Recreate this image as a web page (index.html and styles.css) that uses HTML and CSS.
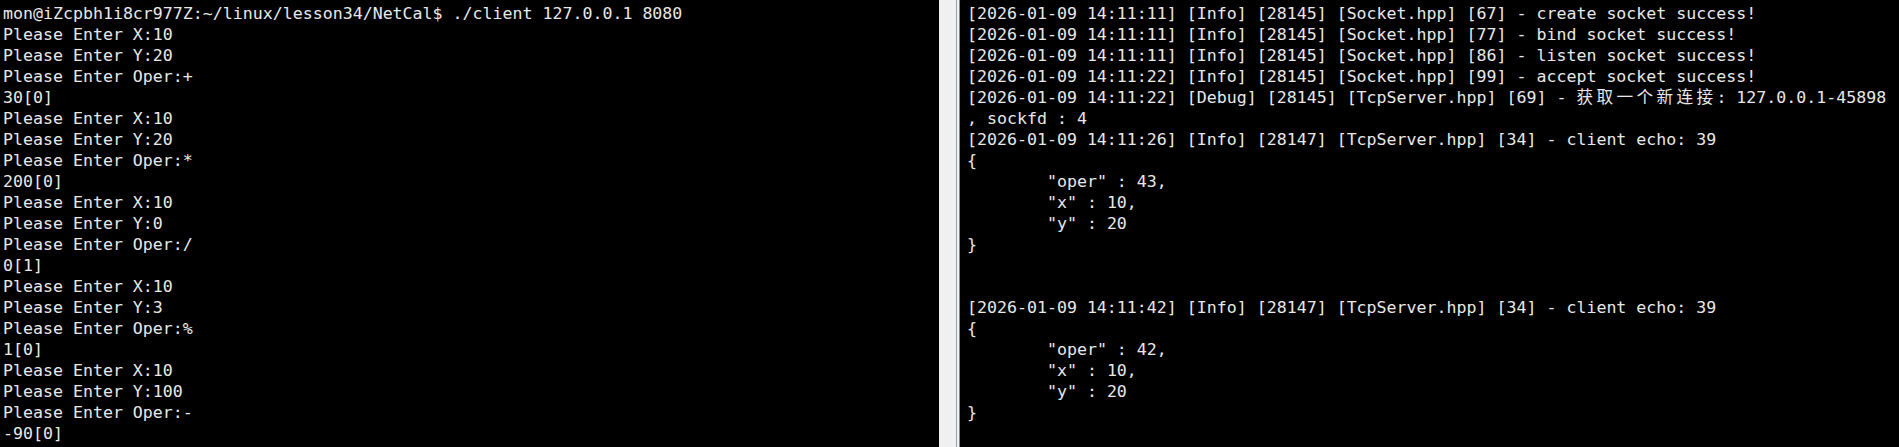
FILE: index.html
```html
<!DOCTYPE html>
<html>
<head>
<meta charset="utf-8">
<link rel="stylesheet" href="styles.css">
</head>
<body>
<div class="screen">
<pre class="pane left">mon@iZcpbh1i8cr977Z:~/linux/lesson34/NetCal$ ./client 127.0.0.1 8080
Please Enter X:10
Please Enter Y:20
Please Enter Oper:+
30[0]
Please Enter X:10
Please Enter Y:20
Please Enter Oper:*
200[0]
Please Enter X:10
Please Enter Y:0
Please Enter Oper:/
0[1]
Please Enter X:10
Please Enter Y:3
Please Enter Oper:%
1[0]
Please Enter X:10
Please Enter Y:100
Please Enter Oper:-
-90[0]</pre>
<div class="divider"><div class="gap"></div><div class="edge"></div><div class="hl"></div><div class="focus"></div></div>
<pre class="pane right">[2026-01-09 14:11:11] [Info] [28145] [Socket.hpp] [67] - create socket success!
[2026-01-09 14:11:11] [Info] [28145] [Socket.hpp] [77] - bind socket success!
[2026-01-09 14:11:11] [Info] [28145] [Socket.hpp] [86] - listen socket success!
[2026-01-09 14:11:22] [Info] [28145] [Socket.hpp] [99] - accept socket success!
[2026-01-09 14:11:22] [Debug] [28145] [TcpServer.hpp] [69] - <span class="cjk">获取一个新连接</span>: 127.0.0.1-45898
, sockfd : 4
[2026-01-09 14:11:26] [Info] [28147] [TcpServer.hpp] [34] - client echo: 39
{
	"oper" : 43,
	"x" : 10,
	"y" : 20
}


[2026-01-09 14:11:42] [Info] [28147] [TcpServer.hpp] [34] - client echo: 39
{
	"oper" : 42,
	"x" : 10,
	"y" : 20
}</pre>
</div>
</body>
</html>
```
FILE: styles.css
```css
html, body {
  margin: 0;
  padding: 0;
  background: #000;
  overflow: hidden;
}
.screen {
  display: flex;
  width: 1899px;
  height: 447px;
  background: #000;
}
.pane {
  margin: 0;
  font-family: "DejaVu Sans Mono", "Noto Sans CJK SC", monospace;
  font-size: 16.6px;
  line-height: 21px;
  color: #e8e8e8;
  white-space: pre;
  tab-size: 8;
  -moz-tab-size: 8;
  overflow: hidden;
  padding-top: 3px;
}
.left {
  width: 936px;
  padding-left: 3px;
}
.right {
  flex: 1;
  padding-left: 7px;
}
.cjk {
  letter-spacing: 3.4px;
}
.divider {
  display: flex;
  width: 21px;
  height: 447px;
}
.gap { width: 17px; background: #f0f0f0; }
.edge { width: 1px; background: #a0a0a0; }
.hl { width: 2px; background: #f0f0f0; }
.focus { width: 1px; background: #3d9ae8; }
```
